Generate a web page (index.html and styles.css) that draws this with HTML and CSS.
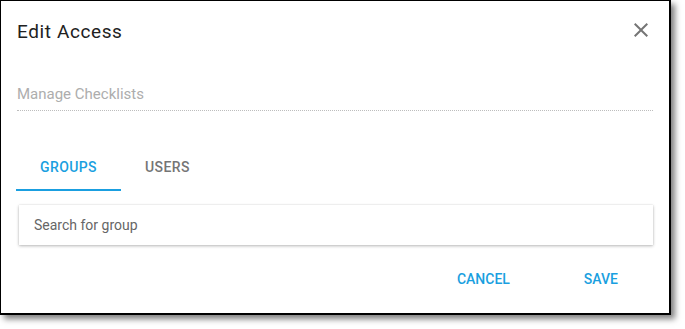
FILE: index.html
```html
<!DOCTYPE html>
<html lang="en">
<head>
  <meta charset="UTF-8" />
  <meta name="viewport" content="width=device-width, initial-scale=1" />
  <title>Edit Access</title>
  <link rel="stylesheet" href="styles.css">
</head>
<body>

  <div class="dialog">
    <div class="dialog-header">
      <h2 class="dialog-title">Edit Access</h2>
      <button class="close-btn" aria-label="Close">
        <svg width="24" height="24" viewBox="0 0 24 24">
          <path d="M19 6.41L17.59 5 12 10.59 6.41 5 5 6.41 10.59 12 5 17.59 6.41 19 12 13.41 17.59 19 19 17.59 13.41 12z" />
        </svg>
      </button>
    </div>

    <div class="field">Manage Checklists</div>

    <div class="tabs">
      <div class="tab active">GROUPS</div>
      <div class="tab">USERS</div>
    </div>

    <div class="search">
      <input type="text" placeholder="Search for group" />
    </div>

    <div class="actions">
      <button class="text-btn">CANCEL</button>
      <button class="text-btn">SAVE</button>
    </div>
  </div>

</body>
</html>
```

FILE: styles.css
```css
:root {
  --accent: #1a9fe0;
  --text: #212121;
  --muted: #757575;
  --hint: #adadad;
}

* {
  box-sizing: border-box;
}

body {
  margin: 0;
  min-height: 100vh;
  background: #fff;
  font-family: Roboto, 'Liberation Sans', sans-serif;
  color: var(--text);
}

.dialog {
  width: 671px;
  background: #fff;
  border-style: solid;
  border-color: #000;
  border-width: 1px 2px 2px 1px;
  box-shadow: 4px 4px 6px rgba(0, 0, 0, 0.5);
  padding: 19px 16px 16px 16px;
}

.dialog-header {
  display: flex;
  justify-content: space-between;
  align-items: flex-start;
  height: 24px;
}

.dialog-title {
  margin: 0;
  font-size: 19px;
  line-height: 24px;
  font-weight: 400;
  letter-spacing: 0.6px;
  color: var(--text);
}

.close-btn {
  background: none;
  border: none;
  padding: 0;
  margin: -2px 0 0 0;
  cursor: pointer;
  width: 24px;
  height: 24px;
  fill: var(--muted);
}

.close-btn svg {
  display: block;
}

.field {
  margin-top: 40px;
  font-size: 15px;
  line-height: 20px;
  color: var(--hint);
  padding-bottom: 6px;
  border-bottom: 1px dotted #bdbdbd;
}

.tabs {
  display: flex;
  margin-top: 32px;
  margin-left: -1px;
}

.tab {
  font-size: 14px;
  line-height: 16px;
  font-weight: 500;
  letter-spacing: 0.4px;
  padding: 16px 24px 14px;
  color: var(--muted);
  border-bottom: 2px solid transparent;
  cursor: pointer;
}

.tab.active {
  color: var(--accent);
  border-bottom-color: var(--accent);
}

.search {
  margin: 14px 0 0 2px;
  height: 40px;
  background: #fff;
  box-shadow: 0 1px 3px rgba(0, 0, 0, 0.28), 0 0 1px rgba(0, 0, 0, 0.12);
  display: flex;
  align-items: center;
}

.search input {
  border: none;
  outline: none;
  width: 100%;
  padding: 0 15px;
  font-family: inherit;
  font-size: 14px;
  line-height: 16px;
  color: var(--text);
  background: transparent;
}

.search input::placeholder {
  color: #666;
}

.actions {
  display: flex;
  justify-content: flex-end;
  gap: 42px;
  margin-top: 16px;
  margin-right: 19px;
}

.text-btn {
  height: 36px;
  padding: 0 16px;
  border: none;
  background: none;
  font-family: inherit;
  font-size: 14px;
  font-weight: 500;
  color: var(--accent);
  cursor: pointer;
}
```
